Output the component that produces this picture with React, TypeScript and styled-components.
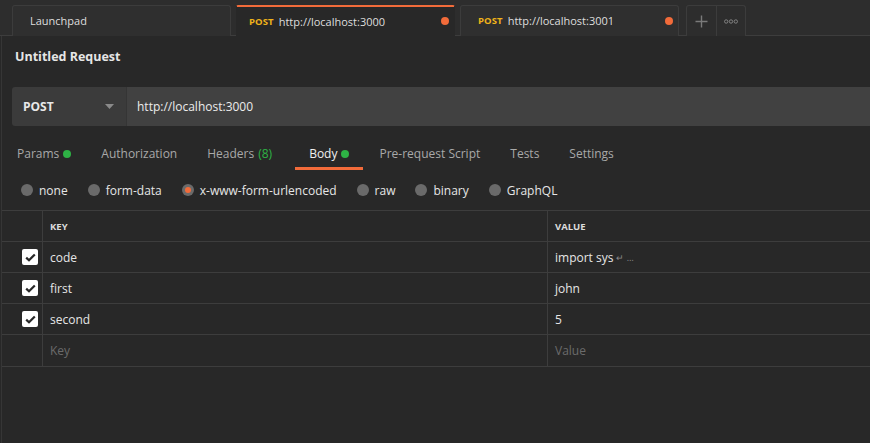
import React from "react";
import styled, { createGlobalStyle, css } from "styled-components";

const Global = createGlobalStyle`
  html, body { margin: 0; padding: 0; background: #282828; }
  body { font-family: "Open Sans", "Liberation Sans", sans-serif; }
  * { box-sizing: border-box; }
`;

const ORANGE = "#f26b3a";
const GREEN = "#2eb245";

const Page = styled.div`
  width: 870px;
  height: 443px;
  background: #282828;
  display: flex;
  flex-direction: column;
  overflow: hidden;
  color: #e4e4e4;
  font-size: 12px;
`;

const TabBar = styled.div`
  height: 36px;
  flex: none;
  background: #2d2d2d;
  display: flex;
  align-items: flex-end;
  padding-left: 12px;
  border-bottom: 1px solid #3d3d3d;
`;

const Tab = styled.div<{ $active?: boolean }>`
  width: 219px;
  height: 31px;
  margin-right: 5px;
  margin-bottom: -1px;
  border: 1px solid #3c3c3c;
  border-bottom: none;
  border-radius: 3px 3px 0 0;
  background: #2f2f2f;
  display: flex;
  align-items: center;
  padding: 0 5px 1px 17px;
  color: #dedede;
  font-size: 11px;
  ${(p) =>
    p.$active &&
    css`
      background: #282828;
      border-color: #282828;
      border-top: 2px solid ${ORANGE};
      border-radius: 2px 2px 0 0;
      padding-left: 12px;
    `}
`;

const Method = styled.span`
  color: #f0b31a;
  font-weight: 700;
  font-size: 9.5px;
  margin-right: 5px;
  letter-spacing: 0.1px;
`;

const TabTitle = styled.span`
  flex: 1;
`;

const Dot = styled.span<{ $color: string; $size?: number }>`
  display: inline-block;
  width: ${(p) => p.$size ?? 8}px;
  height: ${(p) => p.$size ?? 8}px;
  border-radius: 50%;
  background: ${(p) => p.$color};
`;

const ActionGroup = styled.div`
  display: flex;
  height: 31px;
  margin-left: 2px;
  margin-bottom: -1px;
  border: 1px solid #3c3c3c;
  border-bottom: none;
  border-radius: 3px 3px 0 0;
  background: #2d2d2d;
`;

const ActionButton = styled.div<{ $divider?: boolean }>`
  width: 29px;
  display: flex;
  align-items: center;
  justify-content: center;
  ${(p) => p.$divider && css`border-left: 1px solid #3c3c3c;`}
`;

const Content = styled.div`
  flex: 1;
  margin-left: 1px;
  border-left: 1px solid #363636;
  display: flex;
  flex-direction: column;
`;

const Title = styled.div`
  font-weight: 700;
  font-size: 12.5px;
  color: #e6e6e6;
  padding: 12px 0 0 13px;
  height: 51px;
`;

const UrlBar = styled.div`
  margin-left: 10px;
  height: 39px;
  display: flex;
`;

const MethodSelect = styled.div`
  width: 115px;
  background: #3b3b3b;
  border-right: 1px solid #353535;
  border-radius: 3px 0 0 3px;
  display: flex;
  align-items: center;
  justify-content: space-between;
  padding: 0 12px 0 11px;
  font-weight: 700;
  font-size: 12px;
  color: #e8e8e8;
`;

const UrlInput = styled.div`
  flex: 1;
  background: #414141;
  display: flex;
  align-items: center;
  padding-left: 10px;
  font-size: 12px;
  color: #ececec;
`;

const ReqTabs = styled.div`
  display: flex;
  height: 44px;
  padding: 17px 0 0 1px;
`;

const ReqTab = styled.div<{ $active?: boolean }>`
  display: flex;
  align-items: center;
  gap: 4px;
  height: 27px;
  padding: 0 14px 3px;
  font-size: 12px;
  color: ${(p) => (p.$active ? "#f0f0f0" : "#a9a9a9")};
  border-bottom: 3px solid ${(p) => (p.$active ? ORANGE : "transparent")};
  margin-right: 2px;
`;

const Count = styled.span`
  color: ${GREEN};
  margin-right: 7px;
`;

const RadioRow = styled.div`
  display: flex;
  align-items: center;
  height: 40px;
  padding-left: 19px;
  gap: 20px;
`;

const RadioItem = styled.div`
  display: flex;
  align-items: center;
  gap: 6px;
  font-size: 12px;
  color: #e6e6e6;
`;

const Radio = styled.span<{ $checked?: boolean }>`
  width: 12px;
  height: 12px;
  border-radius: 50%;
  background: #6a6a6a;
  display: flex;
  align-items: center;
  justify-content: center;
  &::after {
    content: "";
    width: 6px;
    height: 6px;
    border-radius: 50%;
    background: ${(p) => (p.$checked ? ORANGE : "transparent")};
  }
`;

const Table = styled.div`
  border-top: 1px solid #3d3d3d;
  border-bottom: 1px solid #3d3d3d;
  display: grid;
  grid-template-columns: 40px 505px 1fr;
`;

const Cell = styled.div<{ $head?: boolean; $first?: boolean; $last?: boolean }>`
  height: 31px;
  display: flex;
  align-items: center;
  padding-left: ${(p) => (p.$first ? "0" : "7px")};
  justify-content: ${(p) => (p.$first ? "flex-end" : "flex-start")};
  padding-right: ${(p) => (p.$first ? "4px" : "0")};
  border-left: ${(p) => (p.$first ? "none" : "1px solid #3d3d3d")};
  border-bottom: ${(p) => (p.$last ? "none" : "1px solid #3d3d3d")};
  font-size: ${(p) => (p.$head ? "9.5px" : "12px")};
  font-weight: ${(p) => (p.$head ? 700 : 400)};
  color: ${(p) => (p.$head ? "#dcdcdc" : "#e6e6e6")};
`;

const Placeholder = styled.span`
  color: #6b6b6b;
`;

const Checkbox = styled.span`
  width: 16px;
  height: 16px;
  border-radius: 2px;
  background: #ffffff;
  display: flex;
  align-items: center;
  justify-content: center;
`;

const Muted = styled.span`
  color: #8a8a8a;
  font-size: 9px;
  margin-left: 3px;
`;

const CheckIcon = () => (
  <svg width="11" height="9" viewBox="0 0 11 9">
    <path d="M1.2 4.6 L4 7.3 L9.8 1.4" fill="none" stroke="#282828" strokeWidth="2.2" />
  </svg>
);

const rows = [
  { k: "code", v: "import sys", multi: true },
  { k: "first", v: "john" },
  { k: "second", v: "5" },
];

export default function App() {
  return (
    <Page>
      <Global />
      <TabBar>
        <Tab>
          <TabTitle>Launchpad</TabTitle>
        </Tab>
        <Tab $active>
          <Method>POST</Method>
          <TabTitle>http://localhost:3000</TabTitle>
          <Dot $color={ORANGE} />
        </Tab>
        <Tab>
          <Method>POST</Method>
          <TabTitle>http://localhost:3001</TabTitle>
          <Dot $color={ORANGE} />
        </Tab>
        <ActionGroup>
          <ActionButton>
            <svg width="13" height="13" viewBox="0 0 13 13">
              <path d="M6.5 0.5 V12.5 M0.5 6.5 H12.5" stroke="#7a7a7a" strokeWidth="1.4" />
            </svg>
          </ActionButton>
          <ActionButton $divider>
            <svg width="14" height="5" viewBox="0 0 14 5">
              <circle cx="2.2" cy="2.5" r="1.7" fill="none" stroke="#8a8a8a" strokeWidth="0.9" />
              <circle cx="7" cy="2.5" r="1.7" fill="none" stroke="#8a8a8a" strokeWidth="0.9" />
              <circle cx="11.8" cy="2.5" r="1.7" fill="none" stroke="#8a8a8a" strokeWidth="0.9" />
            </svg>
          </ActionButton>
        </ActionGroup>
      </TabBar>
      <Content>
        <Title>Untitled Request</Title>
        <UrlBar>
          <MethodSelect>
            <span>POST</span>
            <svg width="9" height="5" viewBox="0 0 9 5">
              <path d="M0 0 H9 L4.5 5 Z" fill="#8a8a8a" />
            </svg>
          </MethodSelect>
          <UrlInput>http://localhost:3000</UrlInput>
        </UrlBar>
        <ReqTabs>
          <ReqTab>
            Params <Dot $color={GREEN} />
          </ReqTab>
          <ReqTab>Authorization</ReqTab>
          <ReqTab>
            Headers <Count>(8)</Count>
          </ReqTab>
          <ReqTab $active>
            Body <Dot $color={GREEN} />
          </ReqTab>
          <ReqTab>Pre-request Script</ReqTab>
          <ReqTab>Tests</ReqTab>
          <ReqTab>Settings</ReqTab>
        </ReqTabs>
        <RadioRow>
          <RadioItem>
            <Radio />
            none
          </RadioItem>
          <RadioItem>
            <Radio />
            form-data
          </RadioItem>
          <RadioItem>
            <Radio $checked />
            x-www-form-urlencoded
          </RadioItem>
          <RadioItem>
            <Radio />
            raw
          </RadioItem>
          <RadioItem>
            <Radio />
            binary
          </RadioItem>
          <RadioItem>
            <Radio />
            GraphQL
          </RadioItem>
        </RadioRow>
        <Table>
          <Cell $first $head />
          <Cell $head>KEY</Cell>
          <Cell $head>VALUE</Cell>
          {rows.map((r) => (
            <React.Fragment key={r.k}>
              <Cell $first>
                <Checkbox>
                  <CheckIcon />
                </Checkbox>
              </Cell>
              <Cell>{r.k}</Cell>
              <Cell>
                {r.v}
                {r.multi && <Muted>↵ …</Muted>}
              </Cell>
            </React.Fragment>
          ))}
          <Cell $first $last />
          <Cell $last>
            <Placeholder>Key</Placeholder>
          </Cell>
          <Cell $last>
            <Placeholder>Value</Placeholder>
          </Cell>
        </Table>
      </Content>
    </Page>
  );
}
